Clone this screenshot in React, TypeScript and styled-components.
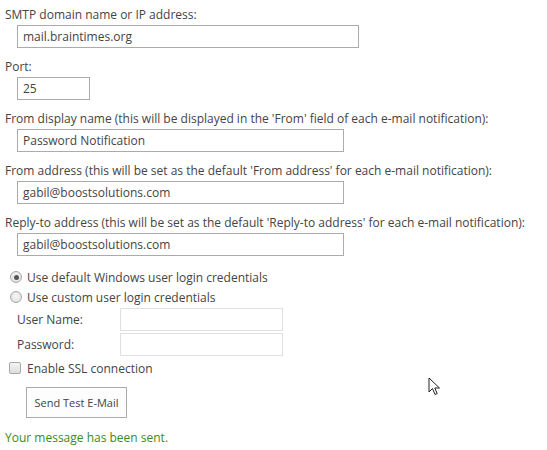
import React from "react";
import styled, { createGlobalStyle } from "styled-components";

const Global = createGlobalStyle`
  html, body { margin: 0; padding: 0; background: #fff; }
  body { font-family: "Open Sans", "Noto Sans", sans-serif; color: #444; }
`;

const Page = styled.div`
  position: relative;
  width: 547px;
  height: 450px;
  padding: 7px 0 0 5px;
  box-sizing: border-box;
  font-size: 12px;
`;

const Group = styled.div`
  display: flex;
  flex-direction: column;
  align-items: flex-start;
  margin-bottom: 11px;
`;

const Label = styled.div`
  line-height: 16px;
  height: 16px;
  white-space: nowrap;
`;

const TextBox = styled.div<{ $w: number }>`
  box-sizing: border-box;
  width: ${(p) => p.$w}px;
  height: 23px;
  margin: 2px 0 0 12px;
  border: 1px solid #ababab;
  padding: 0 0 0 5px;
  line-height: 21px;
  color: #444;
  white-space: nowrap;
`;

const RadioRow = styled.label`
  display: flex;
  align-items: center;
  height: 20px;
  padding-left: 5px;
  gap: 5px;
`;

const Radio = styled.span<{ $on?: boolean }>`
  box-sizing: border-box;
  width: 12px;
  height: 12px;
  border-radius: 50%;
  border: 1px solid #a8a8a8;
  background: radial-gradient(circle at 50% 40%, #f7f7f7, #dcdcdc);
  display: flex;
  align-items: center;
  justify-content: center;
  &::after {
    content: "";
    display: ${(p) => (p.$on ? "block" : "none")};
    width: 5px;
    height: 5px;
    border-radius: 50%;
    background: #555;
  }
`;

const CredGrid = styled.div`
  display: grid;
  grid-template-columns: 103px 163px;
  row-gap: 2px;
  padding-left: 12px;
  margin-top: 1px;
  align-items: center;
`;

const CredLabel = styled.div`
  line-height: 23px;
`;

const CredBox = styled.div`
  box-sizing: border-box;
  height: 23px;
  border: 1px solid #e0e0e0;
  background: #fff;
`;

const CheckRow = styled.label`
  display: flex;
  align-items: center;
  height: 20px;
  padding-left: 4px;
  margin-top: 2px;
  gap: 6px;
`;

const Check = styled.span`
  box-sizing: border-box;
  width: 12px;
  height: 12px;
  border: 1px solid #a8a8a8;
  border-radius: 2px;
  background: linear-gradient(#f4f4f4, #dedede);
`;

const Button = styled.div`
  box-sizing: border-box;
  width: 101px;
  height: 31px;
  margin: 9px 0 0 21px;
  border: 1px solid #ababab;
  background: #fdfdfd;
  display: flex;
  align-items: center;
  justify-content: center;
  font-size: 11px;
  color: #444;
`;

const Message = styled.div`
  margin-top: 12px;
  line-height: 16px;
  color: #3e8a1c;
`;

const Cursor = styled.svg`
  position: absolute;
  left: 428px;
  top: 377px;
`;

const fields: { label: string; value: string; w: number }[] = [
  { label: "SMTP domain name or IP address:", value: "mail.braintimes.org", w: 342 },
  { label: "Port:", value: "25", w: 73 },
  {
    label: "From display name (this will be displayed in the 'From' field of each e-mail notification):",
    value: "Password Notification",
    w: 327,
  },
  {
    label: "From address (this will be set as the default 'From address' for each e-mail notification):",
    value: "gabil@boostsolutions.com",
    w: 327,
  },
  {
    label: "Reply-to address (this will be set as the default 'Reply-to address' for each e-mail notification):",
    value: "gabil@boostsolutions.com",
    w: 327,
  },
];

export default function App() {
  return (
    <>
      <Global />
      <Page>
        {fields.map((f) => (
          <Group key={f.label}>
            <Label>{f.label}</Label>
            <TextBox $w={f.w}>{f.value}</TextBox>
          </Group>
        ))}
        <RadioRow>
          <Radio $on />
          Use default Windows user login credentials
        </RadioRow>
        <RadioRow>
          <Radio />
          Use custom user login credentials
        </RadioRow>
        <CredGrid>
          <CredLabel>User Name:</CredLabel>
          <CredBox />
          <CredLabel>Password:</CredLabel>
          <CredBox />
        </CredGrid>
        <CheckRow>
          <Check />
          Enable SSL connection
        </CheckRow>
        <Button>Send Test E-Mail</Button>
        <Message>Your message has been sent.</Message>
        <Cursor width="14" height="20" viewBox="0 0 14 20">
          <path
            d="M1 1 L1 15 L4.5 11.5 L7 17.5 L9.2 16.6 L6.8 11 L11.5 11 Z"
            fill="#fff"
            stroke="#222"
            strokeWidth="1"
            strokeLinejoin="miter"
          />
        </Cursor>
      </Page>
    </>
  );
}
